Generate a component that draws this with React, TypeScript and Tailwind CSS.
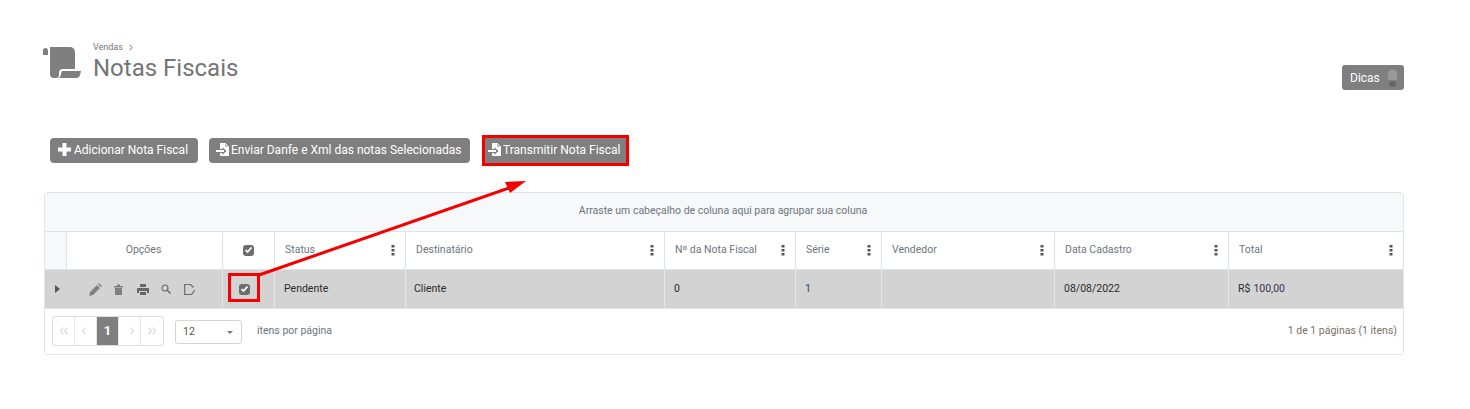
import { ReactNode } from 'react';

const columns = '[grid-template-columns:22px_156px_52px_131px_259px_131px_86px_173px_174px_175px]';

const FileIcon = () => (
  <svg width="15" height="15" viewBox="0 0 15 15" className="mr-[1px] shrink-0">
    <path d="M5 1h5.500L14 4.500V14H5v-3h2.500v1.800L11.500 9 7.500 5.200V7H5z" fill="#fff" />
    <path d="M10 1v4h4z" fill="#7f7f7f" opacity="0.5" />
    <path d="M1 8h8v2H1z" fill="#fff" />
  </svg>
);

const Kebab = () => (
  <svg width="4" height="12" viewBox="0 0 4 12" className="shrink-0">
    <rect x="0.500" y="1" width="3" height="2.500" fill="#555" />
    <rect x="0.500" y="5" width="3" height="2.500" fill="#555" />
    <rect x="0.500" y="9" width="3" height="2.500" fill="#555" />
  </svg>
);

const Check = () => (
  <span className="flex h-[11px] w-[11px] items-center justify-center rounded-[3px] bg-[#6d6d6d]">
    <svg width="9" height="8" viewBox="0 0 9 8">
      <path d="M1.500 4.200 3.500 6l4-4.500" fill="none" stroke="#fff" strokeWidth="1.800" />
    </svg>
  </span>
);

const Btn = ({ icon, children, className }: { icon: ReactNode; children: ReactNode; className: string }) => (
  <button className={`flex h-[25px] items-center rounded-[4px] bg-[#7f7f7f] pb-[2px] text-[12px] text-white ${className}`}>
    {icon}
    {children}
  </button>
);

const HeadCell = ({ title }: { title: string }) => (
  <div className="flex items-center justify-between border-r border-[#dee2ea] pr-[10px] pb-[2px] pl-[10px] text-[#6c757d]">
    <span>{title}</span>
    <Kebab />
  </div>
);

const RowCell = ({ children }: { children?: ReactNode }) => (
  <div className="flex items-center border-r border-[#e4e6ea] pl-[9px] text-[#2b2b2b]">{children}</div>
);

const PagerBtn = ({ children, active }: { children: ReactNode; active?: boolean }) => (
  <span
    className={`flex h-[28px] w-[22px] items-center justify-center border-r border-[#e6e6e6] text-[13px] last:border-r-0 ${
      active ? 'bg-[#7f7f7f] font-bold text-white' : 'text-[#c4c4c4]'
    }`}
  >
    {children}
  </span>
);

const Chevrons = ({ double, flip }: { double?: boolean; flip?: boolean }) => (
  <svg width="10" height="8" viewBox="0 0 10 8" className={flip ? 'rotate-180' : ''}>
    <path d="M4.500.5 1.500 4l3 3.500" fill="none" stroke="#c8c8c8" />
    {double && <path d="M8.500.5 5.500 4l3 3.500" fill="none" stroke="#c8c8c8" />}
  </svg>
);

const App = () => {
  return (
    <div className="relative h-[409px] w-[1470px] overflow-hidden bg-white font-['Roboto',sans-serif]">
      <div className="ml-[44px] w-[1360px]">
        <header className="flex h-[127px] items-start justify-between pt-[42px]">
          <div className="flex">
            <svg width="38" height="32" viewBox="0 0 38 32" className="mt-[5px] -ml-[1px]">
              <path d="M0 3.500a2.500 2.500 0 0 1 5 0V8H0z" fill="#7f7f7f" />
              <path d="M7 0h20a5 5 0 0 1 5 5v17H20a4 4 0 0 0-4 4v2a3 3 0 0 1-3 3h-2a4 4 0 0 1-4-4z" fill="#7f7f7f" />
              <path d="M19 24h19l-1 4a4 4 0 0 1-4 3H16a5 5 0 0 0 2-4z" fill="#7f7f7f" />
            </svg>
            <div className="ml-[12px]">
              <div className="flex h-[11px] items-center gap-[6px] text-[9px] leading-[11px] text-[#737373]">
                Vendas
                <svg width="4" height="7" viewBox="0 0 4 7">
                  <path d="M.7.700 3.200 3.500.7 6.300" fill="none" stroke="#737373" />
                </svg>
              </div>
              <h1 className="mt-[1px] text-[24px] leading-[29px] text-[#757575]">Notas Fiscais</h1>
            </div>
          </div>
          <button className="mt-[23px] flex h-[25px] w-[62px] items-center rounded-[3px] bg-[#7f7f7f] pl-[8px] text-[12px] text-white">
            Dicas
            <svg width="9" height="18" viewBox="0 0 9 18" className="ml-[8px]">
              <path d="M0 5a4.500 4.500 0 0 1 9 0v5c0 .7-.5 1-1 1H1c-.5 0-1-.3-1-1z" fill="#999" />
              <path d="M1 12.500h7v2a3.500 3.500 0 0 1-7 0z" fill="#666" />
            </svg>
          </button>
        </header>

        <div className="ml-[6px] flex h-[65px] items-start">
          <Btn
            className="mt-[11px] w-[148px] pl-[8px]"
            icon={
              <svg width="13" height="13" viewBox="0 0 13 13" className="mr-[3px]">
                <path d="M4.500 0h4v4.500H13v4H8.500V13h-4V8.500H0v-4h4.500z" fill="#fff" />
              </svg>
            }
          >
            Adicionar Nota Fiscal
          </Btn>
          <Btn className="mt-[11px] ml-[11px] w-[261px] pl-[6px]" icon={<FileIcon />}>
            Enviar Danfe e Xml das notas Selecionadas
          </Btn>
          <div className="mt-[8px] ml-[12px] flex h-[31px] w-[147px] items-center border-[3px] border-[#f40000] bg-[#7f7f7f] pb-[2px] pl-[2px] text-[12px] text-white">
            <FileIcon />
            Transmitir Nota Fiscal
          </div>
        </div>

        <section className="h-[163px] rounded-[3px] border border-[#e3e5ec] text-[10.500px]">
          <div className="flex h-[38px] items-center justify-center bg-[#f7f8fa] pr-[2px] pb-[2px] text-[#6c757d]">
            Arraste um cabeçalho de coluna aqui para agrupar sua coluna
          </div>
          <div className={`grid h-[39px] border-t border-b border-[#dee2ea] ${columns}`}>
            <div className="border-r border-[#dee2ea] bg-[#f7f8fa]" />
            <div className="flex items-center justify-center border-r border-[#dee2ea] pr-[2px] pb-[2px] text-[#6c757d]">Opções</div>
            <div className="flex items-center justify-center border-r border-[#dee2ea] pb-[1px]">
              <Check />
            </div>
            {['Status', 'Destinatário', 'Nº da Nota Fiscal', 'Série', 'Vendedor', 'Data Cadastro', 'Total'].map((t) => (
              <HeadCell key={t} title={t} />
            ))}
          </div>
          <div className={`grid h-[39px] border-b border-[#e4e6ea] bg-[#d3d3d3] ${columns}`}>
            <div className="flex items-center justify-center">
              <svg width="5" height="8" viewBox="0 0 5 8" className="ml-[3px]">
                <path d="M0 0l5 4-5 4z" fill="#555" />
              </svg>
            </div>
            <div className="flex items-center border-r border-[#e4e6ea] pl-[22px]">
              <svg width="13" height="13" viewBox="0 0 13 13">
                <path d="M0 13l1-4 7-7 3 3-7 7zM9 1l1-1 3 3-1 1z" fill="#808080" />
              </svg>
              <svg width="9" height="11" viewBox="0 0 9 11" className="ml-[12px]">
                <path d="M0 2h3V.5h3V2h3v1.500H0zM1 4h7v7H1z" fill="#808080" />
              </svg>
              <svg width="12" height="11" viewBox="0 0 12 11" className="ml-[14px]">
                <path d="M3 0h6v3H3zM0 4h12v5h-2V7H2v2H0zM3 8h6v3H3z" fill="#666" />
              </svg>
              <svg width="10" height="10" viewBox="0 0 10 10" className="ml-[12px]">
                <circle cx="4" cy="4" r="3" fill="none" stroke="#666" strokeWidth="1.200" />
                <path d="M6.300 6.300 9.500 9.500" stroke="#666" strokeWidth="1.400" />
              </svg>
              <svg width="12" height="11" viewBox="0 0 12 11" className="ml-[13px]">
                <path d="M11 6 7.500 10.500H.7V.5h5.800L9.500 3.500" fill="none" stroke="#6a6a6a" strokeWidth="1.200" />
              </svg>
            </div>
            <div className="flex items-center justify-center border-r border-[#e4e6ea] pr-[8px]">
              <Check />
            </div>
            <RowCell>Pendente</RowCell>
            <RowCell>
              <span className="-ml-[1px]">Cliente</span>
            </RowCell>
            <RowCell>0</RowCell>
            <RowCell>
              <span className="text-[#2a4a63]">1</span>
            </RowCell>
            <RowCell />
            <RowCell>08/08/2022</RowCell>
            <RowCell>
              R$<span className="ml-[3px] text-[#3a3350]">100,00</span>
            </RowCell>
          </div>
          <div className="flex items-start pt-[7px] pr-[6px] pl-[7px]">
            <div className="flex overflow-hidden rounded-[3px] border border-[#dedede]">
              <PagerBtn>
                <Chevrons double />
              </PagerBtn>
              <PagerBtn>
                <Chevrons />
              </PagerBtn>
              <PagerBtn active>1</PagerBtn>
              <PagerBtn>
                <Chevrons flip />
              </PagerBtn>
              <PagerBtn>
                <Chevrons double flip />
              </PagerBtn>
            </div>
            <div className="mt-[4px] ml-[11px] flex h-[24px] w-[67px] items-center justify-between rounded-[3px] border border-[#d5d5d5] pr-[8px] pl-[7px] text-[#555]">
              12
              <span className="h-0 w-0 border-x-[3px] border-t-[3px] border-x-transparent border-t-[#777]" />
            </div>
            <span className="mt-[7px] ml-[15px] text-[#6c757d]">itens por página</span>
            <span className="mt-[7px] ml-auto text-[#7a6f66]">1 de 1 páginas (1 itens)</span>
          </div>
        </section>
      </div>

      {/* anotacao em vermelho por cima da tela */}
      <div className="absolute top-[273px] left-[228px] h-[29px] w-[32px] border-[3px] border-[#f40000]" />
      <svg width="1470" height="409" className="pointer-events-none absolute top-0 left-0">
        <path d="M259 275 512 187" stroke="#f40000" strokeWidth="3" />
        <path d="M526 181 505 182 510 193z" fill="#f40000" />
      </svg>
    </div>
  );
};

export default App;
